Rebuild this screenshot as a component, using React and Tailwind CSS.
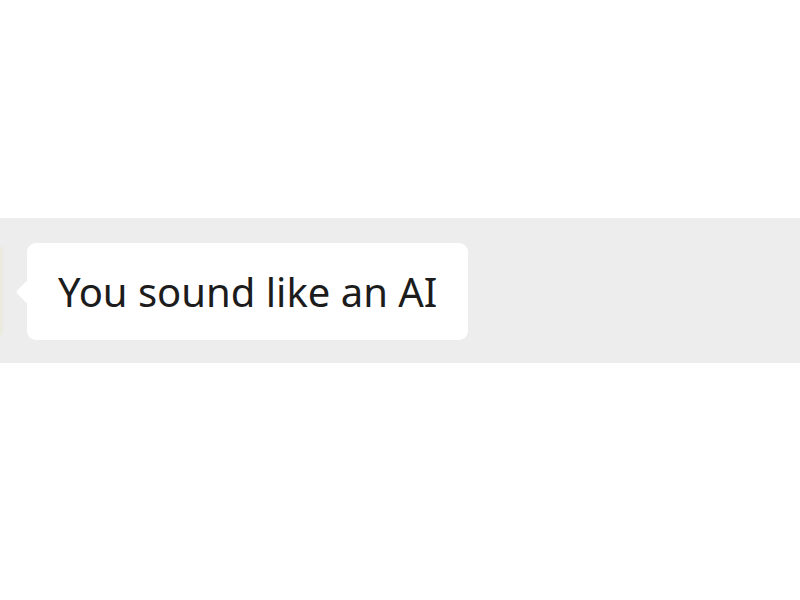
import React from "react";

const Bubble = ({ text }) => {
  return (
    <div className="relative ml-[24px] flex h-[97px] items-center rounded-[9px] bg-white px-[31px]">
      {/* little tail pointing at the sender */}
      <div className="absolute left-[-8px] top-[41px] h-[16px] w-[16px] rotate-45 rounded-[2px] bg-white" />
      <span className="relative text-[40px] leading-none text-[#1c1c1c] [font-family:'Noto_Sans',Roboto,sans-serif]">
        {text}
      </span>
    </div>
  );
};

export default function App() {
  return (
    <div className="h-[600px] w-[800px] bg-white">
      <div className="h-[218px]" />
      <div className="flex h-[145px] items-start bg-[#ededed] pt-[25px]">
        {/* edge of the cut-off avatar */}
        <div className="mt-[4px] h-[88px] w-[3px] bg-[#ebeade]" />
        <Bubble text="You sound like an AI" />
      </div>
    </div>
  );
}
